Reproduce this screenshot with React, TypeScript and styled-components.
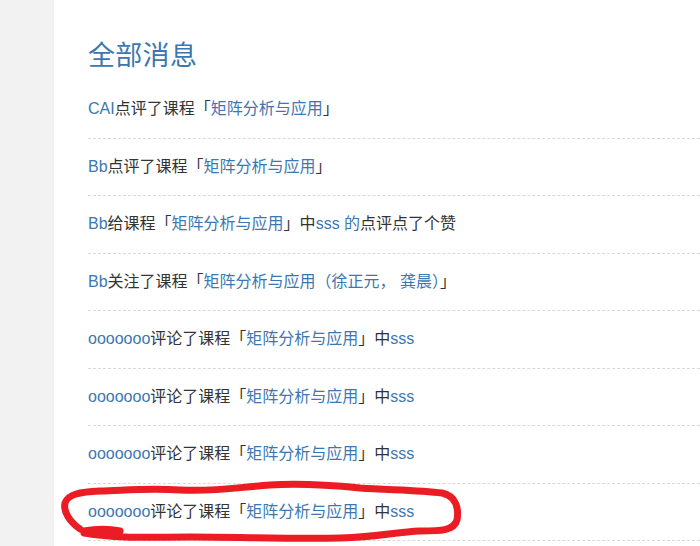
import React from "react";
import styled, { createGlobalStyle } from "styled-components";

const Global = createGlobalStyle`
  html, body { margin: 0; padding: 0; background: #f2f2f2; }
  body { font-family: "Liberation Sans", "Noto Sans CJK SC", sans-serif; }
`;

const Page = styled.div`
  display: flex;
  min-height: 546px;
  position: relative;
  overflow: hidden;
`;

const Side = styled.div`
  width: 54px;
  flex: none;
  background: #f2f2f2;
`;

const Main = styled.main`
  flex: 1;
  background: #fff;
  padding: 37px 0 0 34px;
`;

const Title = styled.h1`
  margin: 0;
  font-size: 27px;
  font-weight: normal;
  line-height: 38px;
  color: #3c77b1;
  letter-spacing: 0.3px;
`;

const List = styled.ul`
  list-style: none;
  margin: 6px 0 0;
  padding: 0;
`;

const Row = styled.li`
  padding: 18px 0 18px;
  line-height: 20.5px;
  font-size: 16px;
  color: #333;
  border-bottom: 1px dashed #d9d9d9;
  white-space: nowrap;
`;

const Link = styled.a`
  color: #3c77b1;
  text-decoration: none;
`;

const Mark = styled.svg`
  position: absolute;
  left: 0;
  top: 0;
  pointer-events: none;
`;

type Item = { who: string; parts: Array<[string, boolean]> };

const comment = (): Item => ({
  who: "ooooooo",
  parts: [
    ["评论了课程「", false],
    ["矩阵分析与应用", true],
    ["」中", false],
    ["sss", true],
  ],
});

const items: Item[] = [
  { who: "CAI", parts: [["点评了课程「", false], ["矩阵分析与应用", true], ["」", false]] },
  { who: "Bb", parts: [["点评了课程「", false], ["矩阵分析与应用", true], ["」", false]] },
  {
    who: "Bb",
    parts: [
      ["给课程「", false],
      ["矩阵分析与应用", true],
      ["」中", false],
      ["sss 的", true],
      ["点评点了个赞", false],
    ],
  },
  {
    who: "Bb",
    parts: [["关注了课程「", false], ["矩阵分析与应用（徐正元， 龚晨）", true], ["」", false]],
  },
  comment(),
  comment(),
  comment(),
  comment(),
];

export default function App() {
  return (
    <>
      <Global />
      <Page>
        <Side />
        <Main>
          <Title>全部消息</Title>
          <List>
            {items.map((it, i) => (
              <Row key={i}>
                <Link href="#">{it.who}</Link>
                {it.parts.map(([t, l], j) =>
                  l ? <Link key={j} href="#">{t}</Link> : <span key={j}>{t}</span>
                )}
              </Row>
            ))}
          </List>
        </Main>
        <Mark width="700" height="546" viewBox="0 0 700 546">
          <path
            d="M 84 531 C 95 529, 110 529, 120 531 M 80 529 C 70 522, 63 512, 65 503 C 68 494, 80 492, 100 491 C 130 490, 150 488, 180 490 C 215 492, 240 487, 270 485 C 300 483, 330 485, 360 488 C 390 490, 420 490, 442 493 C 456 496, 459 508, 457 520 C 454 531, 440 531, 420 531 C 395 532, 380 537, 340 538 C 290 539, 240 537, 190 537 C 150 537, 120 539, 84 533"
            fill="none"
            stroke="#ec1c24"
            strokeWidth="7"
            strokeLinecap="round"
            strokeLinejoin="round"
          />
        </Mark>
      </Page>
    </>
  );
}
